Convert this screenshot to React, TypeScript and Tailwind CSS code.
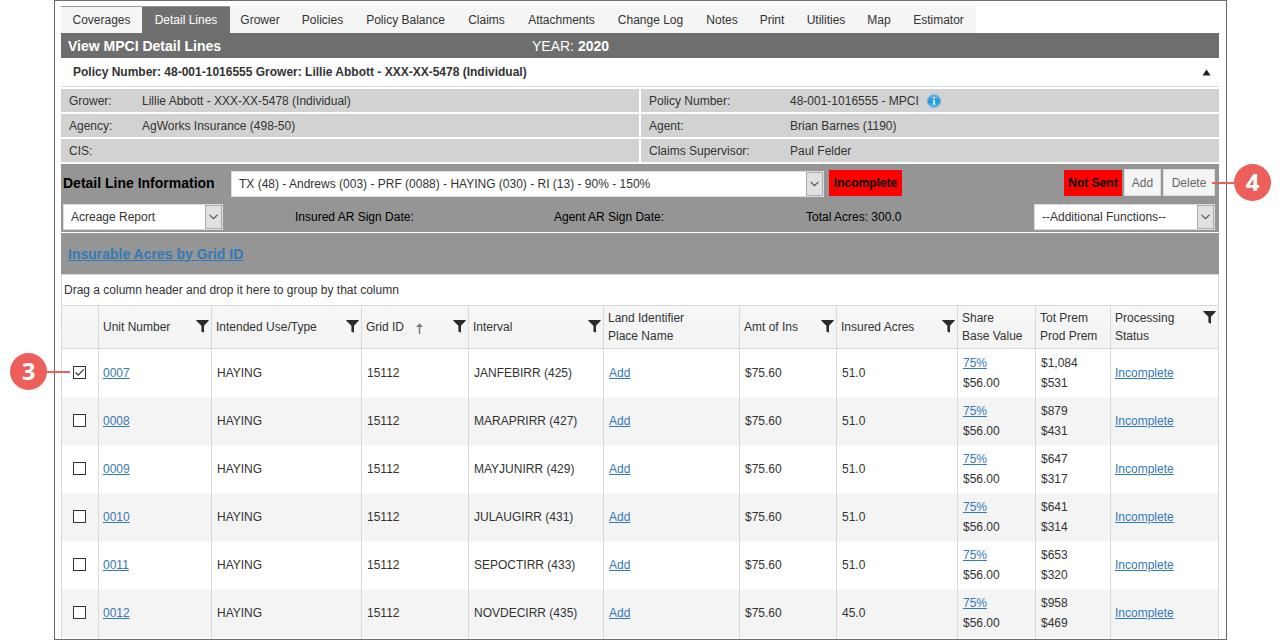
import React from 'react';

interface Line {
  unit: string;
  interval: string;
  acres: string;
  totPrem: string;
  prodPrem: string;
  checked?: boolean;
}

const tabs = [
  { label: 'Coverages', width: 'w-[81px]' },
  { label: 'Detail Lines', width: 'w-[88px]' },
  { label: 'Grower', width: 'w-[60px]' },
  { label: 'Policies', width: 'w-[65px]' },
  { label: 'Policy Balance', width: 'w-[101px]' },
  { label: 'Claims', width: 'w-[61px]' },
  { label: 'Attachments', width: 'w-[89px]' },
  { label: 'Change Log', width: 'w-[89px]' },
  { label: 'Notes', width: 'w-[54px]' },
  { label: 'Print', width: 'w-[46px]' },
  { label: 'Utilities', width: 'w-[62px]' },
  { label: 'Map', width: 'w-[44px]' },
  { label: 'Estimator', width: 'w-[75px]' },
];

const columns = [
  { lines: [''], width: 'w-[37px]' },
  { lines: ['Unit Number'], width: 'w-[113px]', filter: true },
  { lines: ['Intended Use/Type'], width: 'w-[150px]', filter: true },
  { lines: ['Grid ID'], width: 'w-[107px]', filter: true, sorted: true },
  { lines: ['Interval'], width: 'w-[135px]', filter: true },
  { lines: ['Land Identifier', 'Place Name'], width: 'w-[136px]' },
  { lines: ['Amt of Ins'], width: 'w-[97px]', filter: true },
  { lines: ['Insured Acres'], width: 'w-[121px]', filter: true },
  { lines: ['Share', 'Base Value'], width: 'w-[78px]' },
  { lines: ['Tot Prem', 'Prod Prem'], width: 'w-[75px]' },
  { lines: ['Processing', 'Status'], width: 'w-[108px]', filter: true },
];

const rows: Line[] = [
  { unit: '0007', interval: 'JANFEBIRR (425)', acres: '51.0', totPrem: '$1,084', prodPrem: '$531', checked: true },
  { unit: '0008', interval: 'MARAPRIRR (427)', acres: '51.0', totPrem: '$879', prodPrem: '$431' },
  { unit: '0009', interval: 'MAYJUNIRR (429)', acres: '51.0', totPrem: '$647', prodPrem: '$317' },
  { unit: '0010', interval: 'JULAUGIRR (431)', acres: '51.0', totPrem: '$641', prodPrem: '$314' },
  { unit: '0011', interval: 'SEPOCTIRR (433)', acres: '51.0', totPrem: '$653', prodPrem: '$320' },
  { unit: '0012', interval: 'NOVDECIRR (435)', acres: '45.0', totPrem: '$958', prodPrem: '$469' },
];

const FilterIcon = () => (
  <svg width="13" height="13" viewBox="0 0 13 13" className="shrink-0" aria-hidden="true">
    <path d="M0.3 0H12.7V0.8L8 5.8V12.8L5.4 11.6V5.8L0.3 0.8Z" fill="#2b2b2b" />
  </svg>
);

const SortIcon = () => (
  <svg width="7" height="11" viewBox="0 0 7 11" className="mt-0.5 ml-3 shrink-0" aria-hidden="true">
    <path d="M3.5 11V2" fill="none" stroke="#777" strokeWidth="1.4" />
    <path d="M3.5 0.3L7 4H0Z" fill="#777" />
  </svg>
);

const InfoIcon = () => (
  <svg width="14" height="14" viewBox="0 0 14 14" className="mt-px ml-2 inline-block" aria-label="Info">
    <defs>
      <linearGradient id="info" x1="0" y1="0" x2="0" y2="1">
        <stop offset="0" stopColor="#7dbbe0" />
        <stop offset="0.5" stopColor="#2193dc" />
        <stop offset="1" stopColor="#45c0f5" />
      </linearGradient>
    </defs>
    <circle cx="7" cy="7" r="6.5" fill="url(#info)" stroke="#6badd2" strokeWidth="0.8" />
    <path d="M6.2 3.2H7.8V4.7H6.2ZM5.7 6H7.8V9.8H8.5V10.6H5.5V9.8H6.3V6.8H5.7Z" fill="#fff" />
  </svg>
);

const Dropdown: React.FC<{ label: string; value: string; className: string }> = ({ label, value, className }) => (
  <div className={`grid h-[26px] grid-cols-[1fr_17px] border border-[#dcdcdc] bg-white text-[#333] ${className}`}>
    <select
      aria-label={label}
      className="col-span-2 col-start-1 row-start-1 min-w-0 appearance-none bg-transparent pr-5 pl-[7px] outline-none"
    >
      <option>{value}</option>
    </select>
    <span className="pointer-events-none col-start-2 row-start-1 grid place-items-center border border-[#adadad] bg-[#e1e1e1]">
      <svg width="9" height="6" viewBox="0 0 9 6" aria-hidden="true">
        <path d="M0.6 0.8L4.5 4.7L8.4 0.8" fill="none" stroke="#555" strokeWidth="1.2" />
      </svg>
    </span>
  </div>
);

const Link: React.FC<{ children: React.ReactNode }> = ({ children }) => (
  <a href="#" className="text-[#337ab7] underline">
    {children}
  </a>
);

const Field: React.FC<{ label: string; labelWidth: string; children?: React.ReactNode }> = ({
  label,
  labelWidth,
  children,
}) => (
  <div className="flex h-[23px] items-center bg-[#d2d2d2] pl-2">
    <dt className={labelWidth}>{label}</dt>
    <dd className="flex items-center">{children}</dd>
  </div>
);

const Bubble: React.FC<{ n: number }> = ({ n }) => (
  <span className="grid h-[37px] w-[37px] place-items-center rounded-full bg-[#ec5f5b] pb-0.5 font-['Open_Sans',sans-serif] text-2xl font-bold text-white">
    {n}
  </span>
);

const cell = 'border-r border-[#d9d9d9] pl-[5px]';
const linkCell = 'border-r border-[#d9d9d9] pl-1';

export default function App() {
  return (
    <div className="min-h-screen bg-white pr-[55px] pl-[54px] font-['Liberation_Sans',Arial,sans-serif] text-xs text-[#333]">
      <main className="min-h-screen border border-[#6e6e6e] pt-[5px] pr-[7px] pl-[6px]">
        <nav className="flex h-[27px]">
          {tabs.map((tab, i) => (
            <a
              key={tab.label}
              href="#"
              className={`flex items-center justify-center border-t whitespace-nowrap ${tab.width} ${
                i === 1
                  ? 'border-[#999] bg-[#707070] text-white'
                  : i === 0
                    ? 'border-[#999] bg-[#f5f5f5]'
                    : 'border-[#f7f7f7] bg-[#f5f5f5]'
              }`}
            >
              {tab.label}
            </a>
          ))}
        </nav>

        <header className="flex h-[25px] items-center bg-[#6e6e6e] pl-[7px] text-sm text-white">
          <h1 className="w-[464px] font-bold">View MPCI Detail Lines</h1>
          <div>
            YEAR: <b>2020</b>
          </div>
        </header>

        <div className="flex h-[29px] items-center justify-between border-b border-[#d9d9d9] pr-2 pl-3">
          <b>Policy Number: 48-001-1016555 Grower: Lillie Abbott - XXX-XX-5478 (Individual)</b>
          <button aria-label="Collapse">
            <svg width="9" height="7" viewBox="0 0 9 7" aria-hidden="true">
              <path d="M4.5 0.5L8.5 6.5H0.5Z" fill="#222" />
            </svg>
          </button>
        </div>

        <dl className="mt-0.5 grid grid-cols-2 gap-0.5">
          <Field label="Grower:" labelWidth="w-[73px]">
            Lillie Abbott - XXX-XX-5478 (Individual)
          </Field>
          <Field label="Policy Number:" labelWidth="w-[141px]">
            48-001-1016555 - MPCI <InfoIcon />
          </Field>
          <Field label="Agency:" labelWidth="w-[73px]">
            AgWorks Insurance (498-50)
          </Field>
          <Field label="Agent:" labelWidth="w-[141px]">
            Brian Barnes (1190)
          </Field>
          <Field label="CIS:" labelWidth="w-[73px]" />
          <Field label="Claims Supervisor:" labelWidth="w-[141px]">
            Paul Felder
          </Field>
        </dl>

        <section className="mt-0.5 h-[68px] bg-[#959595] pt-[5px] pr-1 pl-0.5 text-black">
          <div className="flex h-7 items-end">
            <h2 className="w-[168px] self-center text-sm font-bold">Detail Line Information</h2>
            <Dropdown
              label="Detail line"
              value="TX (48) - Andrews (003) - PRF (0088) - HAYING (030) - RI (13) - 90% - 150%"
              className="max-w-[593px] flex-1"
            />
            <b className="mb-px ml-[5px] grid h-[26px] w-[73px] place-items-center bg-[#f00]">Incomplete</b>
            <div className="ml-auto flex items-end gap-0.5 self-start">
              <b className="grid h-[26px] w-[58px] place-items-center bg-[#f00]">Not Sent</b>
              <button className="h-[27px] w-[37px] border border-[#dcdcdc] bg-[#f5f5f5] text-[#666]">Add</button>
              <div className="relative">
                <button className="h-[27px] w-[52px] border border-[#dcdcdc] bg-[#f5f5f5] text-[#666]">Delete</button>
                <div className="absolute top-[-5px] left-[49px] flex items-center">
                  <span className="h-0.5 w-[22px] bg-[#ec5f5b]" />
                  <Bubble n={4} />
                </div>
              </div>
            </div>
          </div>
          <div className="mt-[7px] flex h-[26px] items-center">
            <Dropdown label="Report" value="Acreage Report" className="w-40" />
            <span className="ml-[72px] w-[259px]">Insured AR Sign Date:</span>
            <span className="w-[252px]">Agent AR Sign Date:</span>
            <span>Total Acres: 300.0</span>
            <Dropdown label="Additional functions" value="--Additional Functions--" className="ml-auto w-[181px]" />
          </div>
        </section>

        <div className="mt-px flex h-[41px] items-center bg-[#959595] pl-[7px] text-sm font-bold">
          <Link>Insurable Acres by Grid ID</Link>
        </div>

        <div className="flex h-[31px] items-center border border-b-0 border-[#d9d9d9] pl-0.5">
          Drag a column header and drop it here to group by that column
        </div>

        <table className="w-full table-fixed border-separate border-spacing-0 border-l border-[#d9d9d9] text-left">
          <thead>
            <tr className="h-11 bg-linear-to-b from-[#f7f7f7] to-[#f3f3f3]">
              {columns.map((col) => (
                <th
                  key={col.lines[0]}
                  className={`border-y border-r border-[#d9d9d9] p-0 pr-0.5 pl-1 leading-[18px] font-normal whitespace-nowrap ${col.width}`}
                >
                  <div className="flex">
                    <div className="flex flex-1 items-center">
                      <span>
                        {col.lines.map((text) => (
                          <span key={text} className="block">
                            {text}
                          </span>
                        ))}
                      </span>
                      {col.sorted && <SortIcon />}
                    </div>
                    {col.filter && (
                      <button aria-label={`Filter ${col.lines[0]}`} className="flex h-4 items-center">
                        <FilterIcon />
                      </button>
                    )}
                  </div>
                </th>
              ))}
            </tr>
          </thead>
          <tbody className="leading-5">
            {rows.map((row) => (
              <tr key={row.unit} className="h-12 odd:bg-white even:bg-[#f4f4f4]">
                <td className="relative border-r border-[#d9d9d9] pb-0.5 pl-[11px]">
                  <label className="grid w-[13px]">
                    <input
                      type="checkbox"
                      defaultChecked={row.checked}
                      aria-label={`Select unit ${row.unit}`}
                      className="peer col-start-1 row-start-1 h-[13px] w-[13px] appearance-none border border-[#333] bg-white"
                    />
                    <svg
                      viewBox="0 0 13 13"
                      className="pointer-events-none invisible col-start-1 row-start-1 h-[13px] w-[13px] peer-checked:visible"
                      aria-hidden="true"
                    >
                      <path d="M2.5 6.5L5.2 9.2L10.8 3.4" fill="none" stroke="#333" strokeWidth="1.2" />
                    </svg>
                  </label>
                  {row.checked && (
                    <div className="absolute top-[4px] right-[28px] flex items-center">
                      <Bubble n={3} />
                      <span className="h-0.5 w-[23px] bg-[#ec5f5b]" />
                    </div>
                  )}
                </td>
                <td className={linkCell}>
                  <Link>{row.unit}</Link>
                </td>
                <td className={cell}>HAYING</td>
                <td className={cell}>15112</td>
                <td className={cell}>{row.interval}</td>
                <td className={cell}>
                  <Link>Add</Link>
                </td>
                <td className={cell}>$75.60</td>
                <td className={cell}>{row.acres}</td>
                <td className={cell}>
                  <Link>75%</Link>
                  <br />
                  $56.00
                </td>
                <td className={cell}>
                  {row.totPrem}
                  <br />
                  {row.prodPrem}
                </td>
                <td className={linkCell}>
                  <Link>Incomplete</Link>
                </td>
              </tr>
            ))}
            <tr className="h-0.5">
              {columns.map((col) => (
                <td key={col.lines[0]} className="border-r border-[#d9d9d9] p-0" />
              ))}
            </tr>
          </tbody>
        </table>
      </main>
    </div>
  );
}
